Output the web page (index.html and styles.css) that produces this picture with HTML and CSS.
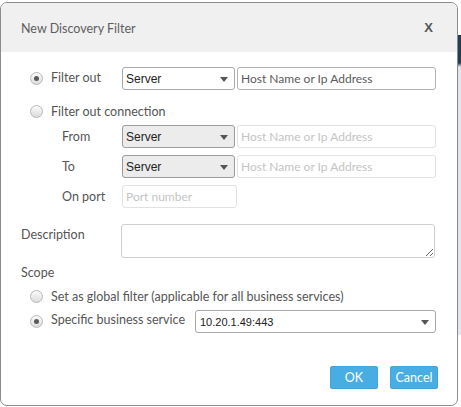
FILE: index.html
```html
<!DOCTYPE html>
<html>
<head>
<meta charset="utf-8">
<link rel="stylesheet" href="styles.css">
</head>
<body>
<div class="backdrop-strip"></div>
<div class="dialog">
  <div class="header">
    <span class="title">New Discovery Filter</span>
    <span class="close">X</span>
  </div>
  <div class="body">
    <div class="row r1">
      <div class="lead lead-radio"><span class="radio checked"></span><span class="label">Filter out</span></div>
      <div class="select"><span>Server</span><span class="arrow"></span></div>
      <div class="input host"><span class="ph dark">Host Name or Ip Address</span></div>
    </div>
    <div class="row r2">
      <div class="lead lead-radio"><span class="radio"></span><span class="label">Filter out connection</span></div>
    </div>
    <div class="row r3">
      <div class="lead lead-sub"><span class="label">From</span></div>
      <div class="select disabled"><span>Server</span><span class="arrow"></span></div>
      <div class="input host disabled"><span class="ph">Host Name or Ip Address</span></div>
    </div>
    <div class="row r4">
      <div class="lead lead-sub"><span class="label">To</span></div>
      <div class="select disabled"><span>Server</span><span class="arrow"></span></div>
      <div class="input host disabled"><span class="ph">Host Name or Ip Address</span></div>
    </div>
    <div class="row r5">
      <div class="lead lead-sub"><span class="label">On port</span></div>
      <div class="input port disabled"><span class="ph">Port number</span></div>
    </div>
    <div class="row r6">
      <div class="lead lead-desc"><span class="label">Description</span></div>
      <textarea class="desc"></textarea>
    </div>
    <div class="row r7">
      <div class="lead lead-desc"><span class="label">Scope</span></div>
    </div>
    <div class="row r8">
      <div class="lead-radio"><span class="radio"></span><span class="label">Set as global filter (applicable for all business services)</span></div>
    </div>
    <div class="row r9">
      <div class="lead-radio spec"><span class="radio checked"></span><span class="label">Specific business service</span></div>
      <div class="select wide"><span>10.20.1.49:443</span><span class="arrow"></span></div>
    </div>
    <div class="buttons">
      <button class="btn">OK</button>
      <button class="btn">Cancel</button>
    </div>
  </div>
</div>
</body>
</html>
```

FILE: styles.css
```css
html, body {
  margin: 0;
  padding: 0;
  background: #ffffff;
}
body {
  position: relative;
  width: 461px;
  height: 407px;
  overflow: hidden;
  font-family: "Lato", "Open Sans", sans-serif;
  font-size: 12.5px;
  color: #555555;
}
.backdrop-strip {
  position: absolute;
  left: 458px;
  top: 35px;
  width: 3px;
  height: 300px;
  background: linear-gradient(#1e3e5c 0, #1e3e5c 28px, #dfe8ef 32px, #dfe8ef 100%);
}
.dialog {
  position: relative;
  margin-top: 2px;
  width: 456px;
  height: 402px;
  border: 1px solid #8c8c8c;
  border-radius: 7px;
  background: #ffffff;
  overflow: hidden;
  display: flex;
  flex-direction: column;
}
.header {
  height: 49px;
  background: #f0f0f0;
  display: flex;
  align-items: center;
  justify-content: space-between;
  padding: 0 24px 0 20px;
  flex-shrink: 0;
}
.title {
  font-size: 12.5px;
  color: #5e5e5e;
  margin-top: 1px;
}
.close {
  font-family: "Liberation Sans", sans-serif;
  font-weight: bold;
  font-size: 13px;
  color: #555;
}
.body {
  display: flex;
  flex-direction: column;
  padding-top: 15px;
}
.row {
  display: flex;
  align-items: center;
}
.lead {
  width: 121px;
  box-sizing: border-box;
  display: flex;
  align-items: center;
  flex-shrink: 0;
}
.lead-radio {
  padding-left: 29px;
  display: flex;
  align-items: center;
  box-sizing: border-box;
}
.lead-sub { padding-left: 61px; }
.lead-desc { padding-left: 20px; }
.radio {
  width: 11px;
  height: 11px;
  border: 1px solid #b9b9b9;
  border-radius: 50%;
  background: linear-gradient(#fbfbfb, #dcdcdc);
  display: inline-flex;
  align-items: center;
  justify-content: center;
  margin-right: 8px;
  flex-shrink: 0;
}
.radio.checked::after {
  content: "";
  width: 5px;
  height: 5px;
  border-radius: 50%;
  background: #5a5a5a;
}
.label { white-space: nowrap; }
.r1 .label { margin-top: -2px; }
.select {
  width: 102px;
  height: 21px;
  border: 1px solid #a9a9a9;
  border-radius: 3px;
  background: #ffffff;
  display: flex;
  align-items: center;
  justify-content: space-between;
  padding: 0 6px 0 3px;
  box-sizing: content-box;
  font-family: "Liberation Sans", sans-serif;
  font-size: 12px;
  color: #222;
  flex-shrink: 0;
}
.select.disabled {
  background: #ececec;
  border-color: #9c9c9c;
}
.select .arrow {
  width: 0;
  height: 0;
  border-left: 4px solid transparent;
  border-right: 4px solid transparent;
  border-top: 5px solid #555;
  margin-top: 1px;
}
.select.wide {
  width: 229px;
  margin-left: 13px;
  padding-left: 4px;
  padding-right: 6px;
  font-size: 11px;
}
.input {
  height: 21px;
  border: 1px solid #b3b3b3;
  border-radius: 3px;
  background: #fff;
  display: flex;
  align-items: center;
  padding-left: 3px;
  box-sizing: content-box;
  font-size: 12px;
}
.input.host {
  width: 194px;
  margin-left: 2px;
}
.input.disabled { border-color: #e2e2e2; }
.input.port {
  width: 110px;
  margin-left: 0;
}
.ph { color: #c4c4c4; white-space: nowrap; }
.ph.dark { color: #5a5a5a; }
.r1 { margin-top: 0; }
.r2 { margin-top: 10px; height: 22px; }
.r3 { margin-top: 3px; }
.r4 { margin-top: 7px; }
.r5 { margin-top: 7px; }
.r6 { margin-top: 16px; align-items: flex-start; }
.r6 .label { margin-top: 3px; }
.desc {
  width: 312px;
  height: 32px;
  margin: 0 0 0 -1px;
  border: 1px solid #cfcfcf;
  border-radius: 3px;
  padding: 0;
  box-sizing: content-box;
  resize: both;
  font-family: inherit;
}
.r7 { margin-top: 6px; height: 16px; }
.r8 { margin-top: 7px; height: 18px; }
.r9 { margin-top: 5px; }
.spec { width: 181px; }
.spec .label { margin-top: -4px; }
.buttons {
  display: flex;
  justify-content: flex-end;
  gap: 12px;
  margin-top: 33px;
  padding-right: 19px;
}
.btn {
  width: 48px;
  height: 23px;
  border: 1px solid #3ea5da;
  border-radius: 2px;
  background: #47ade2;
  color: #ffffff;
  font-family: "Lato", "Open Sans", sans-serif;
  font-size: 12.5px;
  padding: 0;
}
```
